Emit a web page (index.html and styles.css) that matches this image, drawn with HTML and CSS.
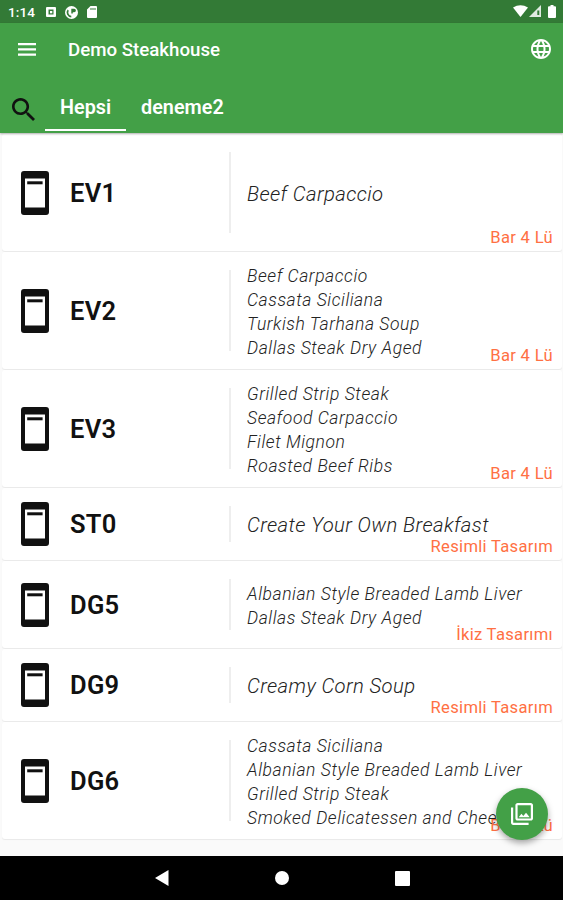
FILE: index.html
```html
<!DOCTYPE html>
<html lang="tr">
  <head>
    <meta charset="UTF-8" />
    <meta name="viewport" content="width=device-width, initial-scale=1.0" />
    <title>Demo Steakhouse</title>
    <link rel="stylesheet" href="styles.css">
  </head>
  <body>
    <svg class="sprite" width="0" height="0">
      <symbol id="device" viewBox="0 0 28 44">
        <path fill-rule="evenodd" d="M3 0h22a3 3 0 0 1 3 3v38a3 3 0 0 1-3 3H3a3 3 0 0 1-3-3V3a3 3 0 0 1 3-3zM4 7.500v29h20v-29z" />
        <path d="M6.200 10.300h15.400v3H6.200z" />
      </symbol>
    </svg>

    <div class="status-bar">
      <span class="clock">1:14</span>
      <svg class="status-icon" width="10" height="10" viewBox="0 0 10 10">
        <path fill-rule="evenodd" d="M1 0h8a1 1 0 0 1 1 1v8a1 1 0 0 1-1 1H1a1 1 0 0 1-1-1V1a1 1 0 0 1 1-1zM2.500 2.500v5h5v-5z" />
        <path d="M4 4h2.300v2.300H4z" />
      </svg>
      <svg class="status-icon" width="13" height="13" viewBox="0 0 13 13">
        <path fill-rule="evenodd" d="M6.500 0a6.500 6.500 0 1 1 0 13 6.500 6.500 0 0 1 0-13zM6.300 2.800v4.700h1.500V6.200h1.400a1.700 1.700 0 0 0 0-3.400zM2.600 3.500a5 5 0 0 0 3.700 8V9.800a3.300 3.300 0 0 1-2.500-5z" />
      </svg>
      <svg class="status-icon" width="10" height="12" viewBox="0 0 10 12">
        <path fill-rule="evenodd" d="M3.500 0H9a1 1 0 0 1 1 1v10a1 1 0 0 1-1 1H1a1 1 0 0 1-1-1V3.500zM3.500 2v2h1V2zm2 0v2h1V2zm2 0v2h1V2z" />
      </svg>
      <div class="status-right">
        <svg width="15" height="12" viewBox="0 0 15 12"><path d="M0 2.500Q7.500-2.200 15 2.500L7.500 12z" /></svg>
        <svg width="12" height="12" viewBox="0 0 12 12">
          <path d="M12 0v12H0z" opacity=".85" />
          <path d="M8.300 5.500h2v4.500h-2z" fill="#337a36" />
        </svg>
        <svg class="battery" width="8" height="13" viewBox="0 0 8 13"><path d="M2.500 0h3v1.300H7a1 1 0 0 1 1 1V12a1 1 0 0 1-1 1H1a1 1 0 0 1-1-1V2.300a1 1 0 0 1 1-1h1.500z" /></svg>
      </div>
    </div>

    <header class="app-bar">
      <div class="toolbar">
        <svg class="menu" width="18" height="13" viewBox="0 0 18 13"><path d="M0 0h18v2.300H0zM0 5.200h18v2.300H0zM0 10.400h18v2.300H0z" /></svg>
        <h1>Demo Steakhouse</h1>
        <svg class="globe" width="20" height="20" viewBox="2 2 20 20">
          <path d="M11.990 2C6.470 2 2 6.480 2 12s4.470 10 9.990 10C17.520 22 22 17.520 22 12S17.520 2 11.990 2zm6.930 6h-2.950c-.32-1.250-.78-2.450-1.380-3.560 1.840.63 3.370 1.910 4.330 3.560zM12 4.040c.83 1.200 1.480 2.530 1.910 3.960h-3.820c.43-1.430 1.080-2.760 1.910-3.960zM4.260 14C4.100 13.360 4 12.690 4 12s.1-1.360.26-2h3.380c-.08.66-.14 1.320-.14 2s.06 1.340.14 2H4.260zm.82 2h2.950c.32 1.250.78 2.450 1.380 3.560-1.840-.63-3.370-1.900-4.330-3.560zm2.950-8H5.080c.96-1.660 2.490-2.930 4.330-3.560C8.810 5.550 8.350 6.750 8.030 8zM12 19.960c-.83-1.200-1.480-2.530-1.910-3.960h3.820c-.43 1.430-1.080 2.760-1.910 3.960zM14.340 14H9.660c-.09-.66-.16-1.320-.16-2s.07-1.350.16-2h4.680c.09.65.16 1.320.16 2s-.07 1.340-.16 2zm.25 5.560c.6-1.110 1.060-2.310 1.380-3.560h2.950c-.96 1.650-2.490 2.930-4.330 3.560zM16.360 14c.08-.66.14-1.320.14-2s-.06-1.340-.14-2h3.380c.16.64.26 1.310.26 2s-.1 1.360-.26 2h-3.380z" />
        </svg>
      </div>
      <nav class="tabs">
        <svg class="search" width="23" height="23" viewBox="3 3 17.490 17.490">
          <path d="M15.500 14h-.79l-.28-.27C15.410 12.590 16 11.110 16 9.500 16 5.910 13.090 3 9.500 3S3 5.910 3 9.500 5.910 16 9.500 16c1.610 0 3.090-.59 4.230-1.570l.27.28v.79l5 4.990L20.490 19l-4.990-5zm-6 0C7.010 14 5 11.990 5 9.500S7.010 5 9.500 5 14 7.010 14 9.500 11.990 14 9.500 14z" />
        </svg>
        <a class="tab active">Hepsi</a>
        <a class="tab">deneme2</a>
      </nav>
    </header>

    <main class="list">
      <div class="card">
        <svg class="device"><use href="#device" /></svg>
        <div class="name">EV1</div>
        <div class="items single"><span>Beef Carpaccio</span></div>
        <div class="tag">Bar 4 Lü</div>
      </div>
      <div class="card">
        <svg class="device"><use href="#device" /></svg>
        <div class="name">EV2</div>
        <div class="items">
          <span>Beef Carpaccio</span>
          <span>Cassata Siciliana</span>
          <span>Turkish Tarhana Soup</span>
          <span>Dallas Steak Dry Aged</span>
        </div>
        <div class="tag">Bar 4 Lü</div>
      </div>
      <div class="card">
        <svg class="device"><use href="#device" /></svg>
        <div class="name">EV3</div>
        <div class="items">
          <span>Grilled Strip Steak</span>
          <span>Seafood Carpaccio</span>
          <span>Filet Mignon</span>
          <span>Roasted Beef Ribs</span>
        </div>
        <div class="tag">Bar 4 Lü</div>
      </div>
      <div class="card short">
        <svg class="device"><use href="#device" /></svg>
        <div class="name">ST0</div>
        <div class="items single"><span>Create Your Own Breakfast</span></div>
        <div class="tag">Resimli Tasarım</div>
      </div>
      <div class="card medium">
        <svg class="device"><use href="#device" /></svg>
        <div class="name">DG5</div>
        <div class="items">
          <span>Albanian Style Breaded Lamb Liver</span>
          <span>Dallas Steak Dry Aged</span>
        </div>
        <div class="tag">İkiz Tasarımı</div>
      </div>
      <div class="card short">
        <svg class="device"><use href="#device" /></svg>
        <div class="name">DG9</div>
        <div class="items single"><span>Creamy Corn Soup</span></div>
        <div class="tag">Resimli Tasarım</div>
      </div>
      <div class="card">
        <svg class="device"><use href="#device" /></svg>
        <div class="name">DG6</div>
        <div class="items">
          <span>Cassata Siciliana</span>
          <span>Albanian Style Breaded Lamb Liver</span>
          <span>Grilled Strip Steak</span>
          <span>Smoked Delicatessen and Cheese</span>
        </div>
        <div class="tag">Bar 4 Lü</div>
      </div>
    </main>

    <button class="fab">
      <svg width="22" height="22" viewBox="2 2 20 20">
        <path d="M20 4v12H8V4h12m0-2H8c-1.100 0-2 .9-2 2v12c0 1.100.9 2 2 2h12c1.100 0 2-.9 2-2V4c0-1.100-.9-2-2-2zm-8.500 9.670l1.690 2.260 2.480-3.100L19 15H9zM2 6v14c0 1.100.9 2 2 2h14v-2H4V6H2z" />
      </svg>
    </button>

    <footer class="nav-bar">
      <svg width="14" height="16" viewBox="0 0 14 16"><path d="M13.500 0v16L0 8z" /></svg>
      <svg width="14" height="14" viewBox="0 0 14 14"><circle cx="7" cy="7" r="7" /></svg>
      <svg width="15" height="15" viewBox="0 0 15 15"><rect width="15" height="15" rx="1" /></svg>
    </footer>
  </body>
</html>
```
FILE: styles.css
```css
* {
  box-sizing: border-box;
}

body {
  margin: 0;
  height: 900px;
  display: flex;
  flex-direction: column;
  position: relative;
  overflow: hidden;
  font-family: Roboto, sans-serif;
  background-color: #fafafa;
}

svg {
  display: block;
  flex: none;
}

.sprite {
  position: absolute;
}

/* Android status bar */
.status-bar {
  height: 23px;
  flex: none;
  display: flex;
  align-items: center;
  padding: 1px 7px 0 8px;
  background-color: #337a36;
  color: #fff;
  fill: #fff;
}

.clock {
  width: 38px;
  font-size: 13.5px;
  font-weight: 500;
  letter-spacing: 0.1px;
}

.status-icon {
  margin-right: 9px;
}

.status-right {
  display: flex;
  align-items: center;
  gap: 1px;
  margin-left: auto;
  margin-top: -2px;
}

.battery {
  margin-left: 6px;
}

/* app bar and tabs */
.app-bar {
  height: 110px;
  flex: none;
  background-color: #43a047;
  color: #fff;
  box-shadow: 0 1px 2px rgba(0, 0, 0, 0.3);
  z-index: 1;
}

.toolbar {
  height: 52px;
  display: flex;
  align-items: center;
  padding: 0 12px 0 18px;
  fill: #fff;
}

h1 {
  margin: 1px auto 0 32px;
  font-size: 18.7px;
  font-weight: 500;
}

.tabs {
  height: 58px;
  display: flex;
}

.search {
  margin: 23px 10px 0 12px;
  fill: #111;
}

.tab {
  height: 56px;
  padding: 0 15px;
  line-height: 66px;
  font-size: 19.8px;
  font-weight: 600;
}

.tab.active {
  border-bottom: 2px solid #fff;
}

/* device list */
.list {
  flex: 1;
  padding: 1px 1px 0 2px;
}

.card {
  position: relative;
  height: 117px;
  margin-bottom: 1px;
  display: flex;
  align-items: center;
  padding: 0 9px 0 19px;
  background-color: #fff;
  border-radius: 3px;
  box-shadow: 0 1px 1px rgba(0, 0, 0, 0.07);
}

.card.short {
  height: 72px;
}

.card.medium {
  height: 87px;
}

.device {
  width: 28px;
  height: 44px;
  fill: #111;
}

.name {
  width: 159px;
  margin-left: 21px;
  font-size: 25.5px;
  font-weight: 600;
  letter-spacing: 0.3px;
  color: #111;
}

.items {
  align-self: stretch;
  margin: 18px 0;
  padding: 2px 0 0 16px;
  display: flex;
  flex-direction: column;
  justify-content: center;
  border-left: 2px solid #eee;
  font-size: 17.5px;
  font-style: italic;
  font-weight: 300;
  line-height: 24px;
  letter-spacing: 0.56px;
  white-space: nowrap;
  color: #222;
}

.items.single {
  font-size: 20.3px;
  letter-spacing: 0.4px;
}

.tag {
  position: absolute;
  right: 9px;
  bottom: 3px;
  font-size: 16.6px;
  line-height: 20px;
  letter-spacing: 0.3px;
  color: #ff7043;
}

.fab {
  position: absolute;
  left: 496px;
  top: 788px;
  width: 52px;
  height: 52px;
  z-index: 2;
  display: flex;
  align-items: center;
  justify-content: center;
  padding: 0;
  border: none;
  border-radius: 50%;
  background-color: #43a047;
  fill: #fff;
  box-shadow: 0 3px 6px rgba(0, 0, 0, 0.35);
}

.nav-bar {
  height: 44px;
  flex: none;
  display: flex;
  align-items: center;
  justify-content: center;
  gap: 106px;
  padding-left: 1px;
  background-color: #000;
  fill: #fff;
}
```
